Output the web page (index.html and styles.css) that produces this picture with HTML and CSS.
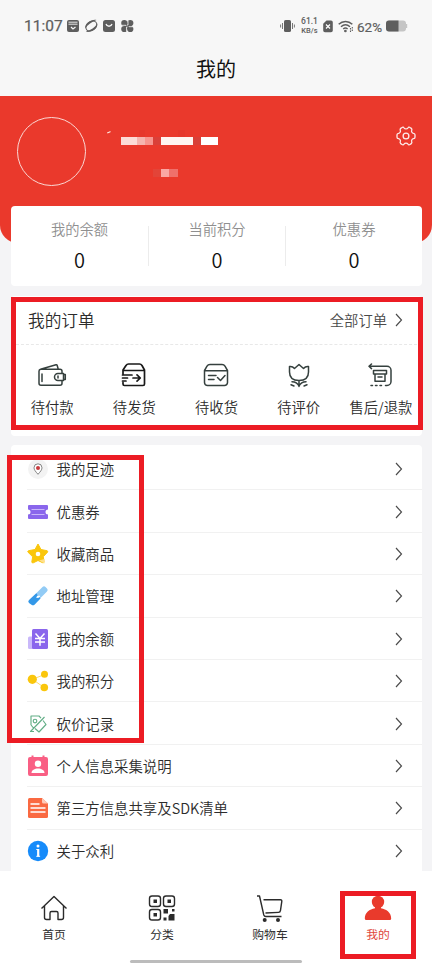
FILE: index.html
```html
<!DOCTYPE html>
<html lang="zh-CN">
<head>
<meta charset="utf-8">
<title>我的</title>
<link rel="stylesheet" href="styles.css">
</head>
<body>
<div class="screen">
  <header class="top">
    <div class="status">
      <span class="time">11:07</span>
      <svg class="apps" width="68" height="14" viewBox="0 0 68 14">
        <g fill="#5e5e5e">
          <rect x="0" y="1" width="12" height="12" rx="2"/>
          <path d="M1.500 3.200h9M1.500 5.200h9" stroke="#f7f7f7" stroke-width=".9"/>
          <path d="M4 8l2 2 2.500-2" stroke="#f7f7f7" stroke-width="1.300" fill="none"/>
          <path d="M18.300 9.500C17.500 4 25 0 29.500 1 25 3 20.500 5.500 18.300 9.500z"/>
          <path d="M30.300 4.500c1 5-6.500 9.500-11.500 8.300C24 11 28 8.500 30.300 4.500z"/>
          <ellipse cx="24.300" cy="7" rx="6" ry="4.300" transform="rotate(-38 24.300 7)" fill="none" stroke="#5e5e5e" stroke-width="1"/>
          <rect x="36" y="1" width="12" height="12" rx="2.500"/>
          <path d="M39 5c1 3 5 3 6 0" stroke="#f7f7f7" stroke-width="1.300" fill="none"/>
          <circle cx="57.300" cy="4" r="3.100"/><circle cx="63.300" cy="4" r="3.100"/><circle cx="57.300" cy="10" r="3.100"/><circle cx="63.300" cy="10" r="3.100"/>
          <path d="M57 4h6.500v6H57z"/>
        </g>
        <path d="M61 1.500v4.500h-1M59.500 12.500V8h1M55 6.300h4V7M66 7.700h-4V7" stroke="#f7f7f7" stroke-width=".8" fill="none"/>
      </svg>
      <span class="grow"></span>
      <svg width="15" height="14" viewBox="0 0 15 14">
        <rect x="4" y="1" width="7" height="12" rx="1.600" fill="#5e5e5e"/>
        <path d="M2.500 4v6M.6 5.500v3M12.500 4v6M14.400 5.500v3" stroke="#777" stroke-width="1"/>
      </svg>
      <span class="speed"><b>61.1</b><b>KB/s</b></span>
      <svg class="sim" width="10" height="13" viewBox="0 0 10 13">
        <path d="M3.500.5H8a1.800 1.800 0 0 1 1.800 1.800v8.200A1.800 1.800 0 0 1 8 12.300H2A1.800 1.800 0 0 1 .2 10.500V3.800z" fill="#5e5e5e"/>
        <path d="M3 4.500l4 4M7 4.500l-4 4" stroke="#fff" stroke-width="1.200"/>
      </svg>
      <svg class="wifi" width="16" height="13" viewBox="0 0 16 13" fill="none" stroke="#5e5e5e" stroke-width="1.500">
        <path d="M.7 4.300c4-3.900 9.600-3.900 13.600 0M3 6.800c2.800-2.600 6.200-2.600 9 0M5.200 9c1.400-1.200 3-1.200 4.400 0"/>
        <circle cx="7.400" cy="11" r=".6"/>
        <path d="M12.500 8v4M14.300 7v4" stroke-width="1.100" stroke-dasharray="1.500 1"/>
      </svg>
      <span class="percent">62%</span>
      <svg width="22" height="12" viewBox="0 0 22 12">
        <path d="M3 .5h14A3 3 0 0 1 20 3.500v5a3 3 0 0 1-3 3H3a3 3 0 0 1-3-3v-5A3 3 0 0 1 3 .5z" fill="#c5c5c5"/>
        <path d="M3 .5h9.500v11H3a3 3 0 0 1-3-3v-5A3 3 0 0 1 3 .5z" fill="#5e5e5e"/>
        <path d="M20.500 4v4" stroke="#c5c5c5" stroke-width="1.400"/>
      </svg>
    </div>
    <h1>我的</h1>
  </header>

  <section class="hero">
    <div class="avatar"></div>
    <svg class="masked" width="116" height="56" viewBox="0 0 116 56">
      <path d="M1 4.500L4.500 3v1.200L1.500 5.500z" fill="#ffe9df"/>
      <path d="M33 2h6v7h-6zM72 2h7v7h-7z" fill="#e6372b"/>
      <path d="M15 9h16v8H15z" fill="#fcdcd7"/><path d="M31 9h8v8h-8z" fill="#f5b4ae"/><path d="M39 9h8v8h-8z" fill="#f7958e"/><path d="M47 9h8v8h-8z" fill="#da4038"/>
      <path d="M55 9h32v8H55z" fill="#fff5f1"/><path d="M87 9h8v8h-8z" fill="#d84038"/><path d="M95 9h17v8H95z" fill="#fff"/>
      <path d="M47 41h8v8h-8z" fill="#e34438"/><path d="M55 41h8v8h-8z" fill="#faa7a3"/><path d="M63 41h9v8h-9z" fill="#ef706b"/>
    </svg>
    <svg class="gear" width="20" height="20" viewBox="0 0 20 20" fill="none" stroke="#fff" stroke-width="1.300" stroke-linejoin="round">
      <path d="M6 1.500c.8-.6 1.700-.3 2.100.5.700 1.200 3.100 1.200 3.800 0 .4-.8 1.300-1.100 2.100-.5l1.300.9c.7.500.7 1.300.4 2-.5 1.300.4 2.700 1.800 2.900.9.100 1.500.7 1.500 1.500v2.400c0 .8-.6 1.400-1.500 1.500-1.400.2-2.300 1.600-1.800 2.900.3.700.3 1.500-.4 2l-1.300.9c-.8.600-1.700.3-2.100-.5-.7-1.200-3.100-1.200-3.800 0-.4.8-1.300 1.100-2.100.5l-1.300-.9c-.7-.5-.7-1.300-.4-2 .5-1.300-.4-2.700-1.800-2.900-.9-.1-1.500-.7-1.500-1.500V8.800c0-.8.600-1.400 1.500-1.500 1.400-.2 2.300-1.600 1.800-2.900-.3-.7-.3-1.500.4-2z"/>
      <circle cx="10" cy="10" r="2.900"/>
    </svg>
  </section>

  <section class="stats card">
    <div class="stat"><span>我的余额</span><strong>0</strong></div>
    <div class="stat"><span>当前积分</span><strong>0</strong></div>
    <div class="stat"><span>优惠券</span><strong>0</strong></div>
  </section>

  <section class="orders card">
    <div class="orders-head"><h2>我的订单</h2><a>全部订单</a><svg class="chev" width="8" height="14" viewBox="0 0 8 14"><path d="M1 1l5.500 6L1 13"/></svg></div>
    <div class="order-grid">
      <div class="order">
        <svg width="30" height="26" viewBox="0 0 30 26"><path d="M4 6.300h19a2 2 0 0 1 2 2v2M25 18v2.300a2 2 0 0 1-2 2H4a2 2 0 0 1-2-2V8.200a2 2 0 0 1 1.500-2L19 1.800a1 1 0 0 1 1.200.7l1 3.500M5 11v7.500"/><path d="M21 10.500h5.500v7H21a3.500 3.500 0 0 1 0-7zM26.500 11.500h1.800v5h-1.800M21 13v2"/></svg>
        <span>待付款</span>
      </div>
      <div class="order">
        <svg class="dark" width="30" height="26" viewBox="0 0 30 26"><path d="M4 11V7l3-4.500Q8 1 9.500 1h11Q22 1 23 2.500L25.500 7v14a1.500 1.500 0 0 1-1.500 1.500H5.500A1.500 1.500 0 0 1 4 21v-1.500M4.500 7.500h21M3.500 12H13M3.500 15h5M3.500 18h3.500M14 15h7M18 11.800l3.300 3.200-3.300 3.200"/></svg>
        <span>待发货</span>
      </div>
      <div class="order">
        <svg width="30" height="26" viewBox="0 0 30 26"><path d="M3.500 7.500L6 3.200Q7 1.500 9 1.500h12q2 0 3 1.700l2.500 4.300v12a3 3 0 0 1-3 3h-17a3 3 0 0 1-3-3zM4 7.800h22M7.500 12.500H15M7.500 16.500H13M16.500 14.500l3 3 4.500-5"/></svg>
        <span>待收货</span>
      </div>
      <div class="order">
        <svg width="30" height="26" viewBox="0 0 30 26"><path d="M5.500 3.500Q8.500 3 10.500 5.500l4.500-4L19.500 5.500Q21.500 3 24.500 3.500V9c0 6-4 8.500-9.500 8.500S5.500 15 5.500 9zM15 17.500v6M8 18.800q5 .2 7 4.200 2-4 7-4.200M7 21.800l3 1.200M23 21.800l-3 1.200"/></svg>
        <span>待评价</span>
      </div>
      <div class="order">
        <svg width="30" height="26" viewBox="0 0 30 26"><path d="M5.500 1L3 3.300l2.500 2.300M3.500 3.300H21a4 4 0 0 1 4 4V18.500a4 4 0 0 1-4 4h-1.500"/><path d="M5 22.500h11.500" stroke-dasharray="1.500 3"/><path d="M7.500 7.500h13V11h-13zM9 11v7.300h10V11M12 14h4"/></svg>
        <span>售后/退款</span>
      </div>
    </div>
  </section>

  <section class="menu card">
    <div class="row">
      <svg width="22" height="22" viewBox="0 0 22 22"><circle cx="11" cy="11" r="10" fill="#f3f3f3"/><path d="M11 16.300C8.500 13.500 7 11.700 7 9.800a4 4 0 0 1 8 0c0 1.900-1.500 3.700-4 6.500z" fill="#fff" stroke="#666" stroke-width=".8"/><circle cx="11" cy="10" r="2" fill="#c9393d"/></svg>
      <span>我的足迹</span><svg class="chev" width="8" height="14" viewBox="0 0 8 14"><path d="M1 1l5.500 6L1 13"/></svg>
    </div>
    <div class="row">
      <svg width="22" height="22" viewBox="0 0 22 22"><path d="M2 4h18q1 0 1 1v3.500a2.500 2.500 0 0 0 0 5V17q0 1-1 1H2q-1 0-1-1v-3.500a2.500 2.500 0 0 0 0-5V5q0-1 1-1z" fill="#8a66ec"/><path d="M4.500 8.500h13M4.500 13.500h13" stroke="#c9b7fa" stroke-width="1"/></svg>
      <span>优惠券</span><svg class="chev" width="8" height="14" viewBox="0 0 8 14"><path d="M1 1l5.500 6L1 13"/></svg>
    </div>
    <div class="row">
      <svg width="22" height="22" viewBox="0 0 22 22"><path d="M11 1l3 5.500 6 1.200q1.300.5.500 1.500l-4.200 4.500.7 5q0 1.500-1.300 1L11 17.500l-4.700 2.300q-1.500.5-1.500-1l.9-5L1 9.200q-.8-1 .5-1.500L8 6.500z" fill="#fac60c" stroke="#fac60c" stroke-linejoin="round"/><path d="M12 17.500l5.500-1.500v4.500z" fill="#ffe08a"/><circle cx="11" cy="11" r="2.300" fill="#fff"/></svg>
      <span>收藏商品</span><svg class="chev" width="8" height="14" viewBox="0 0 8 14"><path d="M1 1l5.500 6L1 13"/></svg>
    </div>
    <div class="row">
      <svg width="22" height="22" viewBox="0 0 22 22"><path d="M9.500 8l6-6q1.500-1.300 3 0l1.500 1.500q1.500 1.500 0 3L13.500 13l-1-2.500-2 .5z" fill="#92cbf5"/><path d="M9.500 8l1.200 2.500-1.700 2 2 .6 2-1.100.5 1.500-6 6.200q-1.500 1.300-3 0L2 18q-1.500-1.500 0-3z" fill="#3398e8"/></svg>
      <span>地址管理</span><svg class="chev" width="8" height="14" viewBox="0 0 8 14"><path d="M1 1l5.500 6L1 13"/></svg>
    </div>
    <div class="row">
      <svg width="22" height="22" viewBox="0 0 22 22"><rect x="1" y="8.500" width="6" height="12.500" rx="1.500" fill="#c9b8fa"/><rect x="5" y="1" width="16" height="20" rx="1.500" fill="#8a66ec"/><path d="M8.500 5.500l4.500 5 4.500-5M8 10.500h10M8 14h10M13 10.500v7.300" fill="none" stroke="#fff" stroke-width="1.500"/></svg>
      <span>我的余额</span><svg class="chev" width="8" height="14" viewBox="0 0 8 14"><path d="M1 1l5.500 6L1 13"/></svg>
    </div>
    <div class="row">
      <svg width="22" height="22" viewBox="0 0 22 22"><path d="M17.500 4.500L5.500 9.300l12 8.500" fill="none" stroke="#fbdc72"/><g fill="#fac60c"><circle cx="5.300" cy="9.300" r="4.600"/><circle cx="17.500" cy="4.300" r="3.500"/><circle cx="17.300" cy="17.500" r="3.800"/></g></svg>
      <span>我的积分</span><svg class="chev" width="8" height="14" viewBox="0 0 8 14"><path d="M1 1l5.500 6L1 13"/></svg>
    </div>
    <div class="row">
      <svg width="22" height="22" viewBox="0 0 22 22" fill="none" stroke="#62ae86" stroke-width="1.150" stroke-linejoin="round"><path d="M4 12V3h8l2 2.200M16 7.500l3 4-7 7.500-4-3.500M17.500 4L3.500 18.500H7M4 12l2.500 3"/><circle cx="8" cy="8" r="1.800"/></svg>
      <span>砍价记录</span><svg class="chev" width="8" height="14" viewBox="0 0 8 14"><path d="M1 1l5.500 6L1 13"/></svg>
    </div>
    <div class="row">
      <svg width="22" height="22" viewBox="0 0 22 22"><path d="M4.500.5h2V2h9V.5h2V2H19q2 0 2 2v15q0 2-2 2H3q-2 0-2-2V4q0-2 2-2h1.500z" fill="#f95f84"/><circle cx="11" cy="8.700" r="3.200" fill="#fff"/><path d="M4.500 18c0-6 13-6 13 0z" fill="#fff"/></svg>
      <span>个人信息采集说明</span><svg class="chev" width="8" height="14" viewBox="0 0 8 14"><path d="M1 1l5.500 6L1 13"/></svg>
    </div>
    <div class="row">
      <svg width="22" height="22" viewBox="0 0 22 22"><path d="M2.500 1H15l6 5.500v13q0 1.500-1.500 1.500h-17Q1 21 1 19.500v-17Q1 1 2.500 1z" fill="#fa6941"/><path d="M15 1l6 5.500h-4.500Q15 6.500 15 5z" fill="#fec9b7"/><path d="M3.500 7h9M3.500 11h15M3.500 15h15" stroke="#fff" stroke-width="1.500"/></svg>
      <span>第三方信息共享及SDK清单</span><svg class="chev" width="8" height="14" viewBox="0 0 8 14"><path d="M1 1l5.500 6L1 13"/></svg>
    </div>
    <div class="row">
      <svg width="22" height="22" viewBox="0 0 22 22"><circle cx="11" cy="11" r="10.200" fill="#168bfa"/><circle cx="11" cy="6" r="1.500" fill="#fff"/><path d="M9.300 9.500h1.700M9.300 16.300h3.800" fill="none" stroke="#fff" stroke-width="1"/><path d="M11.200 9v7.500" stroke="#fff" stroke-width="2.200"/></svg>
      <span>关于众利</span><svg class="chev" width="8" height="14" viewBox="0 0 8 14"><path d="M1 1l5.500 6L1 13"/></svg>
    </div>
  </section>

  <nav class="tabs">
    <div class="tab">
      <svg width="30" height="30" viewBox="0 0 30 30" fill="none" stroke="#2b2b2b" stroke-width="1.400" stroke-linejoin="round"><path d="M2.500 15.500L15 3.500l12.500 12M5.500 13v11.500q0 2 2 2H11V20q0-1.500 1.500-1.500h5Q19 18.500 19 20v6.500h3.500q2 0 2-2V13"/></svg>
      <span>首页</span>
    </div>
    <div class="tab">
      <svg width="30" height="30" viewBox="0 0 30 30"><g fill="none" stroke="#2b2b2b" stroke-width="1.400"><rect x="2.500" y="3" width="11" height="10.500" rx="2.500"/><rect x="16.500" y="3" width="11" height="10.500" rx="2.500"/><rect x="2.500" y="16.500" width="11" height="10.500" rx="2.500"/></g><path d="M6.500 6.500h3.500V10H6.500zM20.500 6.500H24V10h-3.500zM6.500 20H10v3.500H6.500zM16.500 16h4.500v4.500h-4.500zM25 16h2.500v2.500H25zM16.500 24.500h3v3h-3zM21.500 23L23 21h4.500v6.500h-6z" fill="#2b2b2b"/></svg>
      <span>分类</span>
    </div>
    <div class="tab">
      <svg width="30" height="30" viewBox="0 0 30 30"><path d="M2 3h2.500l4.300 19q.5 1.500 2 1.500h15.700M8.500 6.800h17q1.500 0 1.300 1.500l-1.300 9q-.3 2-2 2.100L10.500 20" fill="none" stroke="#2b2b2b" stroke-width="1.400" stroke-linejoin="round"/><circle cx="9.700" cy="27" r="2" fill="#2b2b2b"/><circle cx="23" cy="27" r="2" fill="#2b2b2b"/></svg>
      <span>购物车</span>
    </div>
    <div class="tab active">
      <svg width="30" height="30" viewBox="0 0 30 30" fill="#e93a2c"><circle cx="15" cy="9" r="6.200"/><path d="M12 12h6v3.200c5.500 1 10.200 4.300 10.200 10.300q0 1.500-1.500 1.500H3.300q-1.500 0-1.500-1.500c0-6 4.700-9.300 10.200-10.300z"/></svg>
      <span>我的</span>
    </div>
    <div class="home-bar"></div>
  </nav>

  <div class="mark mark-orders"></div>
  <div class="mark mark-menu"></div>
  <div class="mark mark-tab"></div>
</div>
</body>
</html>
```
FILE: styles.css
```css
* { box-sizing: border-box; }
body {
  margin: 0;
  font-family: "Noto Sans CJK SC", sans-serif;
  font-weight: 350;
  color: #2c2c2c;
}
svg { display: block; flex: none; }
h1, h2 { margin: 0; font-weight: inherit; }

.screen {
  position: relative;
  display: flex;
  flex-direction: column;
  width: 432px;
  height: 964px;
  overflow: hidden;
  background: #f4f4f6;
}

.top { height: 96px; background: #f7f7f7; }
.status {
  display: flex;
  align-items: center;
  height: 52px;
  padding: 0 24px;
  color: #5e5e5e;
}
.time {
  width: 43px;
  font: 400 15.500px/20px Roboto, sans-serif;
  -webkit-text-stroke: .25px #5e5e5e;
  white-space: nowrap;
}
.apps { margin-top: -1px; }
.grow { flex: 1; }
.speed {
  display: flex;
  flex-direction: column;
  align-items: center;
  width: 19px;
  margin-left: 5px;
  font-family: Roboto, sans-serif;
}
.speed b { font-weight: 500; white-space: nowrap; font-size: 7.500px; line-height: 9px; }
.speed b:first-child { font-size: 8.500px; line-height: 10px; margin-top: -2px; }
.sim { margin-left: 4px; }
.wifi { margin-left: 5px; }
.percent {
  width: 27px;
  margin: 1px 2px 0 3px;
  font: 400 13.500px/16px Roboto, sans-serif;
  -webkit-text-stroke: .2px #5e5e5e;
  white-space: nowrap;
}
.top h1 {
  font-size: 20px;
  line-height: 30px;
  margin-top: 2px;
  text-align: center;
  font-weight: 400;
  color: #111;
}

.hero {
  display: flex;
  align-items: flex-start;
  flex: none;
  height: 147px;
  padding: 21px 16px 0 17px;
  background: #ea392c;
  border-radius: 0 0 18px 18px;
}
.avatar {
  width: 69px;
  height: 69px;
  border: 1.5px solid #fbd8d4;
  border-radius: 50%;
}
.masked { margin: 11px 0 0 20px; }
.gear { margin: 9px 0 0 auto; opacity: .9; }

.card {
  flex: none;
  width: 411px;
  margin-left: 11px;
  background: #fff;
  border-radius: 4px;
}

.stats {
  display: grid;
  grid-template-columns: repeat(3, 1fr);
  height: 80px;
  margin-top: -37px;
  padding: 20px 0;
}
.stat {
  display: flex;
  flex-direction: column;
  align-items: center;
  height: 40px;
  border-left: 1px solid #ececec;
}
.stat:first-child { border-left: 0; }
.stat span {
  margin-top: -7px;
  font-size: 14.300px;
  line-height: 20px;
  color: #8f8f8f;
}
.stat strong {
  margin-top: 9px;
  font-size: 20px;
  line-height: 24px;
  font-weight: inherit;
  color: #111;
}

.orders { height: 140px; margin-top: 10px; }
.orders-head {
  display: flex;
  align-items: center;
  height: 49px;
  padding: 0 19px 0 17px;
  border-bottom: 1px dashed #e8e8e8;
}
.orders-head h2 { flex: 1; font-size: 16.700px; line-height: 24px; margin-top: -1px; }
.orders-head a { margin: -2px 8px 0 0; font-size: 14.300px; color: #4a4a4a; }
.chev { fill: none; stroke: #4b4b4b; stroke-width: 1.150; }

.order-grid {
  display: grid;
  grid-template-columns: repeat(5, 1fr);
  padding-top: 18px;
}
.order {
  display: flex;
  flex-direction: column;
  align-items: center;
  font-size: 14.300px;
  line-height: 20px;
  white-space: nowrap;
}
.order svg {
  fill: none;
  stroke: #35403e;
  stroke-width: 1.500;
  stroke-linecap: round;
  stroke-linejoin: round;
}
.order .dark { stroke: #191919; stroke-width: 1.700; }
.order span { margin-top: 8px; }

.menu { height: 434px; margin-top: 9px; padding: 3px 0 0 16px; }
.row {
  display: flex;
  align-items: center;
  height: 42.400px;
  padding: 1px 19px 0 0;
  border-bottom: 1px solid #f1f1f1;
  font-size: 14.400px;
  line-height: 20px;
}
.row span { flex: 1; margin-left: 7.500px; }

.tabs {
  position: relative;
  display: grid;
  grid-template-columns: repeat(4, 1fr);
  height: 93px;
  margin-top: -8px;
  flex: none;
  background: #fff;
}
.tab {
  display: flex;
  flex-direction: column;
  align-items: center;
  padding-top: 22px;
  font-size: 11.800px;
  line-height: 16px;
  font-weight: 400;
}
.tab span { margin-top: 3px; }
.active { color: #e0473c; }
.home-bar {
  position: absolute;
  left: 130px;
  top: 89px;
  width: 172px;
  height: 3px;
  border-radius: 2px;
  background: #bcbcbc;
}

.mark { position: absolute; border: 5px solid #ec1c24; }
.mark-orders { left: 11px; top: 297px; width: 412px; height: 133px; }
.mark-menu { left: 7px; top: 455px; width: 137px; height: 288px; }
.mark-tab { left: 340px; top: 891px; width: 76px; height: 68px; }
```
